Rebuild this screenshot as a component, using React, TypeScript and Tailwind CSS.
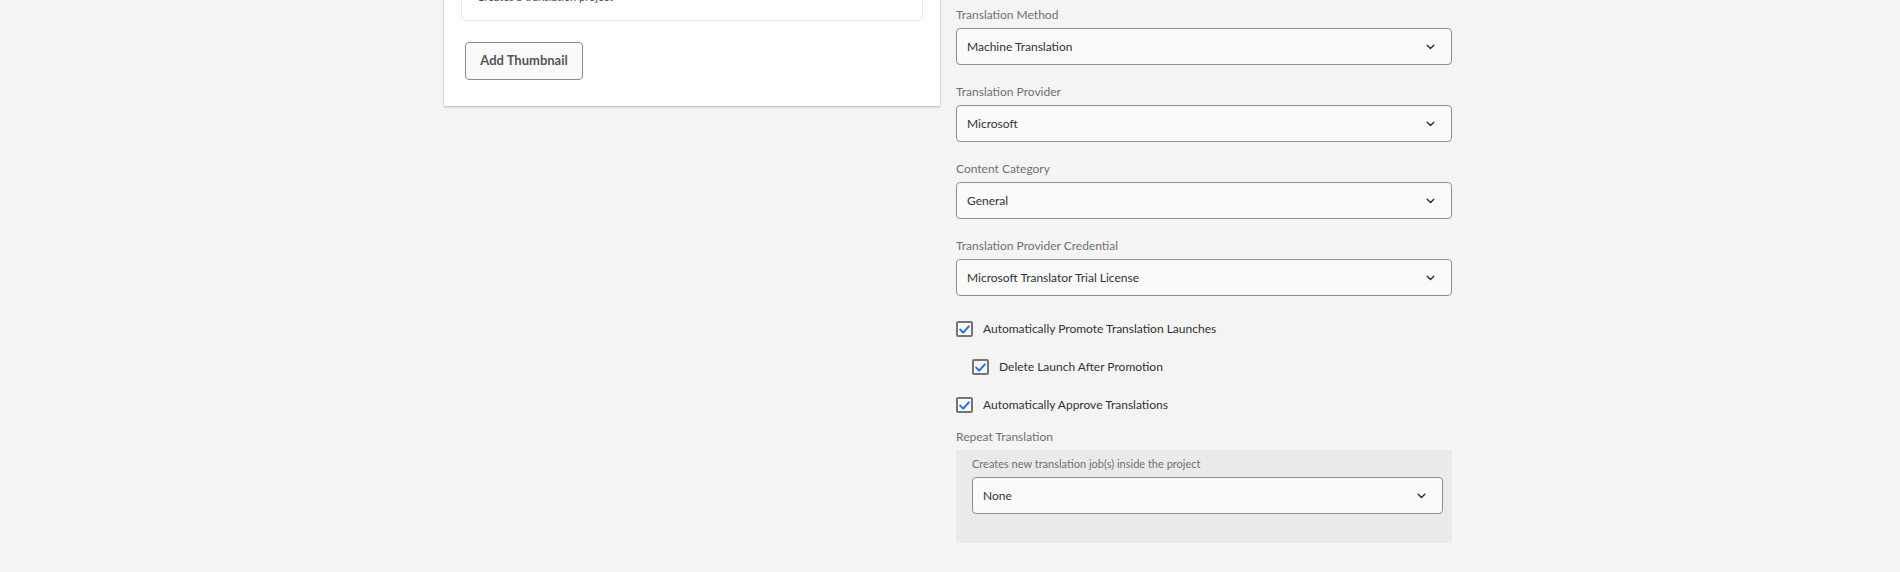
import { ReactNode } from 'react';

const font = { fontFamily: 'Lato, "Open Sans", sans-serif' };

function Chevron() {
  return (
    <svg className="w-[9px] h-[6px]" viewBox="0 0 9 6" fill="none">
      <path d="M1.2 1.3L4.5 4.4l3.3-3.1" stroke="#2c2c2c" strokeWidth="1.4" strokeLinecap="round" strokeLinejoin="round" />
    </svg>
  );
}

function Select({ value }: { value: string }) {
  return (
    <div className="h-[37px] flex items-center justify-between pl-[10px] pr-[16px] bg-[#fafafa] border border-[#8f8f8f] rounded-[4px]">
      <span className="text-[12px] text-[#323232]">{value}</span>
      <Chevron />
    </div>
  );
}

function Field({ label, value, first }: { label: string; value: string; first?: boolean }) {
  return (
    <div className={first ? '' : 'mt-[18px]'}>
      <div className="h-[18px] leading-[18px] text-[12px] text-[#707070]">{label}</div>
      <div className="mt-[4px]">
        <Select value={value} />
      </div>
    </div>
  );
}

function Checkbox({ children, indent }: { children: ReactNode; indent?: boolean }) {
  return (
    <div className={`h-[38px] flex items-center gap-[10px] ${indent ? 'pl-4' : ''}`}>
      <span className="w-[17px] h-[16px] border-2 border-[#747474] rounded-[2px] bg-[#fafafa] flex items-center justify-center">
        <svg className="w-[11px] h-[9px]" viewBox="0 0 11 9" fill="none">
          <path d="M1.2 4.6l3 3L9.8 1.4" stroke="#1473e6" strokeWidth="2" strokeLinecap="round" strokeLinejoin="round" />
        </svg>
      </span>
      <span className="text-[12px] text-[#323232]">{children}</span>
    </div>
  );
}

export default function App() {
  return (
    <div className="min-h-[572px] bg-[#f4f4f4] overflow-hidden" style={font}>
      <div className="w-[1012px] mx-auto flex items-start gap-4">
        {/* Left panel */}
        <div className="w-[496px] bg-white px-[17px] pb-[26px] shadow-[0_1px_2px_rgba(0,0,0,0.28)] -mt-[12px]">
          <div className="border border-t-0 border-[#ebebeb] rounded-b-[4px] px-[15px] pt-[1px] pb-[15px]">
            <p className="h-[16px] leading-[16px] text-[11px] text-[#4b4b4b]">Creates a translation project</p>
          </div>
          <button className="mt-[21px] ml-[4px] w-[118px] h-[38px] border border-[#8a8a8a] rounded-[4px] bg-[#fafafa] text-[13px] font-bold text-[#555555]">
            Add Thumbnail
          </button>
        </div>

        {/* Right column */}
        <div className="w-[496px] pt-[6px]">
          <Field first label="Translation Method" value="Machine Translation" />
          <Field label="Translation Provider" value="Microsoft" />
          <Field label="Content Category" value="General" />
          <Field label="Translation Provider Credential" value="Microsoft Translator Trial License" />

          <div className="mt-[14px]">
            <Checkbox>Automatically Promote Translation Launches</Checkbox>
            <Checkbox indent>Delete Launch After Promotion</Checkbox>
            <Checkbox>Automatically Approve Translations</Checkbox>
          </div>

          <div className="mt-[4px] h-[18px] leading-[18px] text-[12px] text-[#707070]">Repeat Translation</div>
          <div className="mt-[4px] bg-[#eaeaea] pl-4 pr-[9px] pt-[5px] pb-[29px]">
            <div className="h-[18px] leading-[18px] text-[11px] text-[#707070]">Creates new translation job(s) inside the project</div>
            <div className="mt-[4px]">
              <Select value="None" />
            </div>
          </div>
        </div>
      </div>
    </div>
  );
}
